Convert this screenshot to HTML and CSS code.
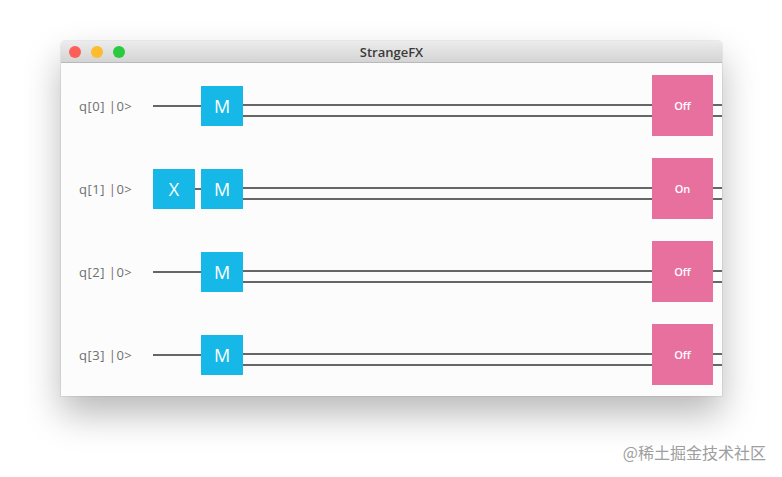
FILE: index.html
```html
<!DOCTYPE html>
<html lang="en">
<head>
    <meta charset="UTF-8">
    <title>StrangeFX</title>
    <link rel="stylesheet" href="styles.css">
</head>
<body>
    <div class="window">
        <div class="titlebar">
            <div class="lights">
                <span class="light red"></span>
                <span class="light yellow"></span>
                <span class="light green"></span>
            </div>
            <div class="title">StrangeFX</div>
        </div>

        <div class="circuit">
            <div class="row">
                <div class="label">q[0] |0&gt;</div>
                <div class="wire lead"></div>
                <div class="gate">M</div>
                <div class="wire double grow"></div>
                <div class="result">Off</div>
                <div class="wire double tail"></div>
            </div>
            <div class="row">
                <div class="label">q[1] |0&gt;</div>
                <div class="gate">X</div>
                <div class="wire link"></div>
                <div class="gate">M</div>
                <div class="wire double grow"></div>
                <div class="result">On</div>
                <div class="wire double tail"></div>
            </div>
            <div class="row">
                <div class="label">q[2] |0&gt;</div>
                <div class="wire lead"></div>
                <div class="gate">M</div>
                <div class="wire double grow"></div>
                <div class="result">Off</div>
                <div class="wire double tail"></div>
            </div>
            <div class="row">
                <div class="label">q[3] |0&gt;</div>
                <div class="wire lead"></div>
                <div class="gate">M</div>
                <div class="wire double grow"></div>
                <div class="result">Off</div>
                <div class="wire double tail"></div>
            </div>
        </div>
    </div>

    <div class="watermark">@稀土掘金技术社区</div>
</body>
</html>
```

FILE: styles.css
```css
body {
    margin: 0;
    padding: 41px 0 0 61px;
    background: #ffffff;
    font-family: 'Open Sans', 'Liberation Sans', sans-serif;
    width: 782px;
    height: 477px;
    box-sizing: border-box;
    overflow: hidden;
}
.window {
    width: 661px;
    background-color: #fcfcfc;
    border-radius: 4px 4px 0 0;
    box-shadow: 0 18px 36px rgba(0, 0, 0, 0.28), 0 0 0 1px rgba(0, 0, 0, 0.06);
}
.titlebar {
    height: 22px;
    box-sizing: border-box;
    display: flex;
    align-items: center;
    background: linear-gradient(#ececec, #d4d4d4);
    border-bottom: 1px solid #b9b9b9;
    border-radius: 4px 4px 0 0;
    padding-left: 8px;
}
.lights {
    display: flex;
    gap: 10px;
    width: 56px;
}
.light {
    width: 12px;
    height: 12px;
    border-radius: 50%;
}
.red { background-color: #fc5f57; }
.yellow { background-color: #fdbb2e; }
.green { background-color: #29c940; }
.title {
    flex: 1;
    text-align: center;
    margin-right: 64px;
    font-family: 'Open Sans', sans-serif;
    font-weight: 600;
    font-size: 13px;
    color: #3a3a3a;
}
.circuit {
    display: flex;
    flex-direction: column;
    gap: 22px;
    padding: 12px 0 11px;
}
.row {
    display: flex;
    align-items: center;
    height: 61px;
}
.label {
    width: 92px;
    box-sizing: border-box;
    padding-left: 18px;
    font-size: 13px;
    letter-spacing: 0.5px;
    color: #6f6f6f;
}
.wire {
    height: 2px;
    background-color: #666;
}
.lead {
    width: 48px;
}
.link {
    width: 6px;
}
.wire.double {
    height: 13px;
    box-sizing: border-box;
    background: none;
    border-top: 2px solid #666;
    border-bottom: 2px solid #666;
    margin-top: 10px;
}
.grow {
    flex: 1;
}
.tail {
    width: 9px;
}
.gate {
    width: 42px;
    height: 40px;
    display: flex;
    align-items: center;
    justify-content: center;
    background-color: #15b8e6;
    color: #fff;
    font-size: 18px;
}
.result {
    width: 61px;
    height: 61px;
    display: flex;
    align-items: center;
    justify-content: center;
    background-color: #e8709f;
    color: #fff;
    font-size: 11px;
    font-weight: 600;
}
.watermark {
    margin-top: 44px;
    padding-right: 16px;
    text-align: right;
    margin-left: -61px;
    font-family: 'Noto Sans CJK SC', sans-serif;
    font-size: 16px;
    color: #9e9e9e;
}
```
